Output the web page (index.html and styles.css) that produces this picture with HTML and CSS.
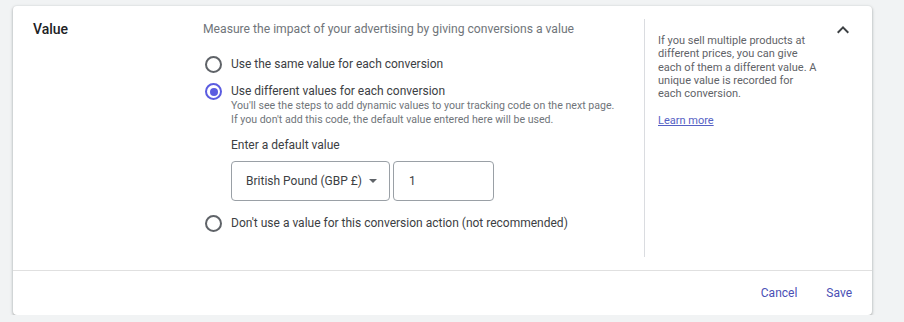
FILE: index.html
```html
<!DOCTYPE html>
<html lang="en">
<head>
<meta charset="utf-8">
<title>Value</title>
<link rel="stylesheet" href="styles.css">
</head>
<body>
<div class="card">
  <div class="main">
    <div class="title-col">
      <div class="title">Value</div>
    </div>
    <div class="content-col">
      <div class="desc">Measure the impact of your advertising by giving conversions a value</div>
      <div class="radio-row first">
        <span class="radio"></span>
        <div class="radio-text">
          <div class="label">Use the same value for each conversion</div>
        </div>
      </div>
      <div class="radio-row">
        <span class="radio checked"></span>
        <div class="radio-text">
          <div class="label">Use different values for each conversion</div>
          <div class="sub">You'll see the steps to add dynamic values to your tracking code on the next page.<br>If you don't add this code, the default value entered here will be used.</div>
          <div class="default-label">Enter a default value</div>
          <div class="fields">
            <div class="select">
              <span>British Pound (GBP £)</span>
              <span class="arrow"></span>
            </div>
            <div class="input">1</div>
          </div>
        </div>
      </div>
      <div class="radio-row last">
        <span class="radio"></span>
        <div class="radio-text">
          <div class="label">Don't use a value for this conversion action (not recommended)</div>
        </div>
      </div>
    </div>
    <div class="help-col">
      <p class="help">If you sell multiple products at different prices, you can give each of them a different value. A unique value is recorded for each conversion.</p>
      <a class="learn" href="#">Learn more</a>
    </div>
    <div class="toggle-col">
      <svg class="chevron" width="24" height="24" viewBox="0 0 24 24"><path d="M12 8l-6 6 1.41 1.41L12 10.83l4.59 4.58L18 14z" fill="#3c4043"/></svg>
    </div>
  </div>
  <div class="footer">
    <button class="btn">Cancel</button>
    <button class="btn">Save</button>
  </div>
</div>
</body>
</html>
```
FILE: styles.css
```css
* { box-sizing: border-box; }
html, body { margin: 0; padding: 0; }
body {
  background: #f1f3f4;
  font-family: Roboto, "Liberation Sans", Arial, sans-serif;
  padding: 6px 0 0 13px;
}
.card {
  width: 859px;
  background: #fff;
  border-radius: 4px;
  box-shadow: 0 1px 2px 0 rgba(60,64,67,.3), 0 1px 3px 1px rgba(60,64,67,.15);
}
.main {
  display: flex;
  padding: 13px 0 13px 0;
  border-bottom: 1px solid #e0e0e0;
}
.title-col {
  width: 190px;
  padding-left: 20px;
}
.title {
  font-size: 14px;
  font-weight: 500;
  line-height: 20px;
  color: #202124;
}
.content-col {
  width: 442px;
  border-right: 1px solid #dadce0;
  padding-bottom: 24px;
}
.desc {
  font-size: 12.15px;
  line-height: 20px;
  color: #70757a;
}
.radio-row {
  display: flex;
  align-items: flex-start;
  margin-top: 7px;
}
.radio-row.first { margin-top: 15px; }
.radio-row.last { margin-top: 12px; }
.radio {
  flex: none;
  width: 17px;
  height: 17px;
  margin: 2px 9px 0 2px;
  border: 2px solid #5f6368;
  border-radius: 50%;
  position: relative;
}
.radio.checked { border-color: #5b5ce0; }
.radio.checked::after {
  content: "";
  position: absolute;
  left: 2.5px;
  top: 2.5px;
  width: 8px;
  height: 8px;
  border-radius: 50%;
  background: #5b5ce0;
}
.label {
  font-size: 12px;
  line-height: 20px;
  color: #3c4043;
}
.sub {
  font-size: 10.6px;
  line-height: 14px;
  color: #70757a;
  margin-top: -2px;
}
.default-label {
  font-size: 12px;
  line-height: 20px;
  color: #3c4043;
  margin-top: 8px;
}
.fields {
  display: flex;
  gap: 3px;
  margin-top: 6px;
}
.select {
  width: 159px;
  height: 40px;
  border: 1px solid #9aa0a6;
  border-radius: 4px;
  display: flex;
  align-items: center;
  justify-content: space-between;
  padding: 0 12px 0 14px;
  font-size: 12px;
  color: #3c4043;
  white-space: nowrap;
}
.arrow {
  width: 0;
  height: 0;
  border-left: 4.5px solid transparent;
  border-right: 4.5px solid transparent;
  border-top: 4.5px solid #5f6368;
}
.input {
  width: 101px;
  height: 40px;
  border: 1px solid #9aa0a6;
  border-radius: 4px;
  display: flex;
  align-items: center;
  padding-left: 15px;
  font-size: 12px;
  color: #3c4043;
}
.help-col {
  width: 175px;
  padding: 15px 0 0 13px;
}
.help {
  margin: 0;
  font-size: 11px;
  line-height: 13.3px;
  color: #5f6368;
  width: 160px;
}
.learn {
  display: inline-block;
  margin-top: 13.3px;
  font-size: 11px;
  line-height: 13.3px;
  color: #5561c4;
  text-decoration: underline;
}
.toggle-col {
  flex: 1;
  display: flex;
  justify-content: flex-start;
  padding-left: 11px;
}
.chevron { display: block; margin-top: -1px; }
.footer {
  height: 44px;
  display: flex;
  align-items: center;
  justify-content: flex-end;
  gap: 29px;
  padding-right: 20px;
}
.btn {
  background: none;
  border: 0;
  padding: 0;
  font-family: inherit;
  font-size: 12px;
  font-weight: 400;
  color: #4a50b5;
  cursor: pointer;
}
```
